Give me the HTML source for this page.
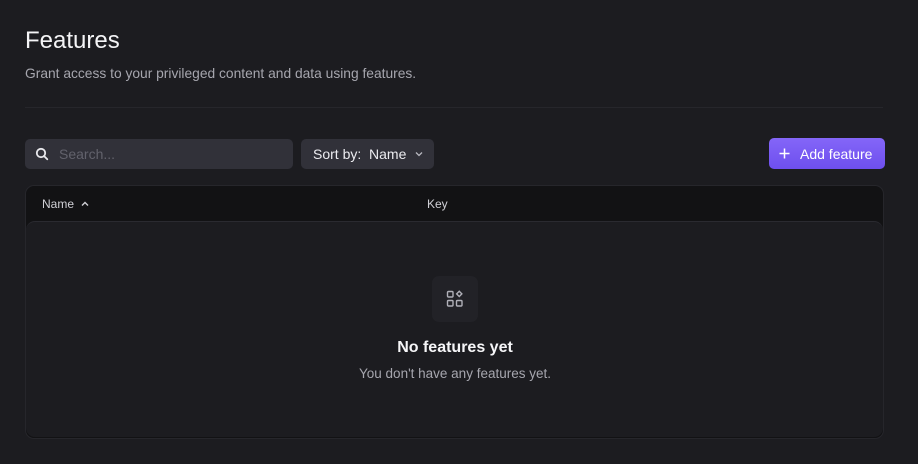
<!DOCTYPE html>
<html><head><style>
body{margin:0;width:918px;height:464px;background:#1c1c20;font-family:"Liberation Sans",sans-serif;position:relative;overflow:hidden;color:#fff}
.a{position:absolute}
</style></head><body>
<div class="a" style="left:25px;top:27px;font-size:24px;color:#f4f4f6">Features</div>
<div class="a" style="left:25px;top:66px;font-size:13.8px;color:#a6a6ae">Grant access to your privileged content and data using features.</div>
<div class="a" style="left:25px;top:107px;width:858px;height:1px;background:#26262b"></div>
<div class="a" style="left:25px;top:139px;width:268px;height:30px;background:#313139;border-radius:5px"></div>
<svg class="a" style="left:35px;top:147px" width="14" height="14" viewBox="0 0 14 14"><circle cx="6" cy="6" r="4.2" fill="none" stroke="#e8e8ec" stroke-width="1.8"/><path d="M9 9l3.3 3.3" stroke="#e8e8ec" stroke-width="1.8" stroke-linecap="round"/></svg>
<div class="a" style="left:59px;top:146px;font-size:14px;color:#62626c">Search...</div>
<div class="a" style="left:301px;top:139px;width:133px;height:30px;background:#313139;border-radius:5px"></div>
<div class="a" style="left:313px;top:146px;font-size:14px;color:#ececf0">Sort by:&nbsp; Name</div>
<svg class="a" style="left:414px;top:150px" width="10" height="8" viewBox="0 0 10 8"><path d="M2 2.5l3 3 3-3" fill="none" stroke="#b8b8c0" stroke-width="1.3"/></svg>
<div class="a" style="left:769px;top:138px;width:116px;height:31px;background:linear-gradient(#8466f8,#6e4fee);border-radius:5px"></div>
<svg class="a" style="left:778px;top:147px" width="13" height="13" viewBox="0 0 13 13"><path d="M6.5 1.5v10M1.5 6.5h10" stroke="#fff" stroke-width="1.5"/></svg>
<div class="a" style="left:800px;top:146px;font-size:14px;color:#fff">Add feature</div>
<div class="a" style="left:25px;top:185px;width:857px;height:252px;background:#121214;border:1px solid #26262b;border-radius:9px"></div>
<div class="a" style="left:42px;top:197px;font-size:12px;color:#d0d0d6">Name</div>
<svg class="a" style="left:80px;top:200px" width="10" height="8" viewBox="0 0 10 8"><path d="M2 5.5l3-3 3 3" fill="none" stroke="#d0d0d6" stroke-width="1.4"/></svg>
<div class="a" style="left:427px;top:197px;font-size:12px;color:#d0d0d6">Key</div>
<div class="a" style="left:26px;top:221px;width:857px;height:215px;background:#1c1c20;border-radius:9px;border-top:1px solid #2a2a30"></div>
<div class="a" style="left:432px;top:276px;width:46px;height:46px;background:#222227;border-radius:7px"></div>
<svg class="a" style="left:446px;top:290px" width="18" height="18" viewBox="0 0 18 18" fill="none" stroke="#b0b0b8" stroke-width="1.4"><rect x="1.5" y="1.5" width="5.5" height="5.5" rx="1"/><rect x="1.5" y="10.5" width="5.5" height="5.5" rx="1"/><rect x="10.5" y="10.5" width="5.5" height="5.5" rx="1"/><path d="M13.25 1.3l2.6 2.6-2.6 2.6-2.6-2.6z"/></svg>
<div class="a" style="left:0;width:910px;top:339px;text-align:center;font-size:16px;font-weight:bold;color:#f6f6f8">No features yet</div>
<div class="a" style="left:0;width:910px;top:366px;text-align:center;font-size:13.5px;color:#a6a6ae">You don't have any features yet.</div>
</body></html>
